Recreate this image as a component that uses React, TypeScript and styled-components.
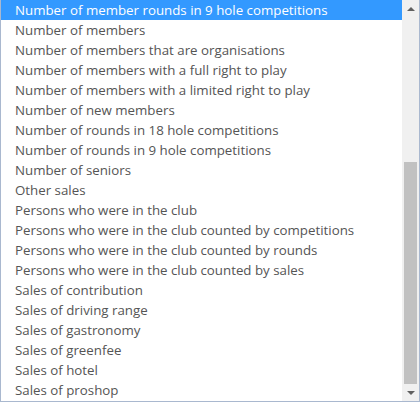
import React from 'react';
import styled, { createGlobalStyle } from 'styled-components';

const GlobalStyle = createGlobalStyle`
  html, body {
    margin: 0;
    padding: 0;
    background: #ffffff;
  }
`;

const ListBox = styled.div`
  width: 420px;
  height: 402px;
  box-sizing: border-box;
  border: 1px solid #a9b8cf;
  border-top: none;
  display: flex;
  background: #ffffff;
  overflow: hidden;
`;

const Options = styled.ul`
  flex: 1;
  margin: 0;
  padding: 0;
  list-style: none;
`;

const Option = styled.li<{ $selected?: boolean }>`
  height: 20px;
  line-height: 20px;
  padding-left: 14px;
  font-family: 'Open Sans', 'Noto Sans', sans-serif;
  font-size: 13.3px;
  white-space: nowrap;
  color: ${({ $selected }) => ($selected ? '#ffffff' : '#555555')};
  background: ${({ $selected }) => ($selected ? '#3399ff' : 'transparent')};
`;

const ScrollBar = styled.div`
  width: 17px;
  background: #f0f0f0;
  display: flex;
  flex-direction: column;
`;

const ArrowButton = styled.div`
  height: 17px;
  display: flex;
  align-items: center;
  justify-content: center;
  color: #606060;
`;

const Track = styled.div`
  flex: 1;
  display: flex;
  flex-direction: column;
  padding: 0 2px;
`;

const Thumb = styled.div`
  background: #c1c1c1;
`;

const items = [
  'Number of member rounds in 9 hole competitions',
  'Number of members',
  'Number of members that are organisations',
  'Number of members with a full right to play',
  'Number of members with a limited right to play',
  'Number of new members',
  'Number of rounds in 18 hole competitions',
  'Number of rounds in 9 hole competitions',
  'Number of seniors',
  'Other sales',
  'Persons who were in the club',
  'Persons who were in the club counted by competitions',
  'Persons who were in the club counted by rounds',
  'Persons who were in the club counted by sales',
  'Sales of contribution',
  'Sales of driving range',
  'Sales of gastronomy',
  'Sales of greenfee',
  'Sales of hotel',
  'Sales of proshop',
];

const Arrow: React.FC<{ up?: boolean }> = ({ up }) => (
  <svg width="8" height="4" viewBox="0 0 8 4">
    <path d={up ? 'M0 4 L4 0 L8 4 Z' : 'M0 0 L4 4 L8 0 Z'} fill="currentColor" />
  </svg>
);

const App: React.FC = () => {
  const trackTop = 145;
  const thumbHeight = 222;
  return (
    <>
      <GlobalStyle />
      <ListBox>
        <Options>
          {items.map((label, i) => (
            <Option key={label} $selected={i === 0}>
              {label}
            </Option>
          ))}
        </Options>
        <ScrollBar>
          <ArrowButton>
            <Arrow up />
          </ArrowButton>
          <Track>
            <div style={{ height: trackTop }} />
            <Thumb style={{ height: thumbHeight }} />
          </Track>
          <ArrowButton>
            <Arrow />
          </ArrowButton>
        </ScrollBar>
      </ListBox>
    </>
  );
};

export default App;
